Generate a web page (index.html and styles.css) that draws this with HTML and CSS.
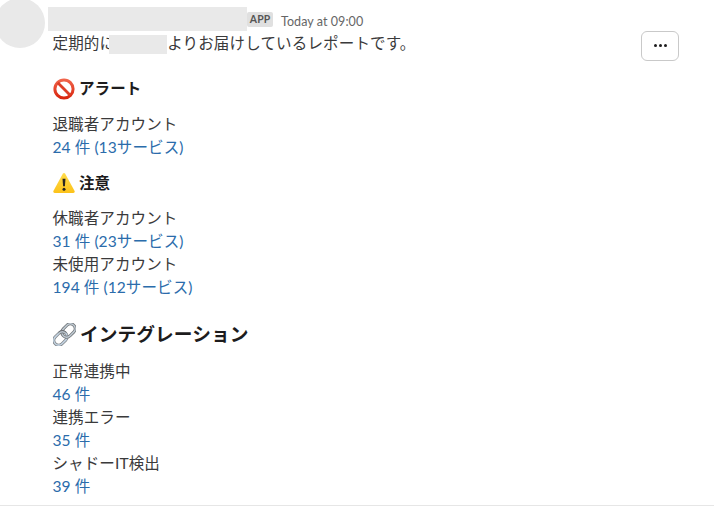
FILE: index.html
```html
<!DOCTYPE html>
<html lang="ja">
<head>
<meta charset="utf-8">
<title>レポート</title>
<link rel="stylesheet" href="styles.css">
</head>
<body>
<article class="message">
  <div class="avatar"></div>
  <div class="content">
    <header class="head">
      <span class="name"></span>
      <span class="badge">APP</span>
      <time class="time">Today at 09:00</time>
    </header>
    <div class="intro">
      <p class="line">定期的に<span class="mask"></span>よりお届けしているレポートです。</p>
      <button class="more" aria-label="その他"><i></i><i></i><i></i></button>
    </div>
    <h3 class="title title-alert">
      <svg class="icon" viewBox="0 0 22 22">
        <defs><linearGradient id="red" x1="0" y1="0" x2="0" y2="1"><stop offset="0" stop-color="#f0644a"/><stop offset="1" stop-color="#d9260f"/></linearGradient></defs>
        <circle cx="11" cy="11" r="9.1" fill="none" stroke="url(#red)" stroke-width="3"/>
        <path d="M4.8 4.8 17.2 17.2" stroke="#dd3e27" stroke-width="2.8"/>
      </svg><span>アラート</span>
    </h3>
    <p class="line">退職者アカウント</p>
    <a class="line link">24 件 (13サービス)</a>
    <h3 class="title title-warning">
      <svg class="icon" viewBox="0 0 22 22">
        <defs><linearGradient id="yellow" x1="0" y1="0" x2="0" y2="1"><stop offset="0" stop-color="#ffdc4a"/><stop offset="1" stop-color="#fcc21a"/></linearGradient></defs>
        <path d="M9.8 1.8Q11 .2 12.2 1.8L21.6 19Q22.2 21 20.3 21H1.7Q-.2 21 .4 19Z" fill="url(#yellow)"/>
        <path d="M9.5 6.7h3l-.6 7.6h-1.8Z" fill="#292622"/>
        <circle cx="11" cy="17.3" r="1.5" fill="#292622"/>
      </svg><span>注意</span>
    </h3>
    <p class="line">休職者アカウント</p>
    <a class="line link">31 件 (23サービス)</a>
    <p class="line">未使用アカウント</p>
    <a class="line link">194 件 (12サービス)</a>
    <h2 class="title title-integration">
      <svg class="icon icon-link" viewBox="0 0 24 24">
        <g fill="none" transform="rotate(-45 12 12)">
          <rect x="-1.6" y="7" width="15.4" height="10" rx="5" stroke="#7d8184" stroke-width="3.2"/>
          <rect x="-1.6" y="7" width="15.4" height="10" rx="5" stroke="#c3d3e2" stroke-width="1.7"/>
          <rect x="10.2" y="7" width="15.4" height="10" rx="5" stroke="#707477" stroke-width="3.2"/>
          <rect x="10.2" y="7" width="15.4" height="10" rx="5" stroke="#c0cbd4" stroke-width="1.6"/>
          <path d="M8.8 7Q13.8 7 13.8 12" stroke="#686c70" stroke-width="3.2"/>
          <path d="M8.3 7Q13.8 7 13.8 12.5" stroke="#b9c3cb" stroke-width="1.5"/>
        </g>
      </svg><span>インテグレーション</span>
    </h2>
    <p class="line">正常連携中</p>
    <a class="line link">46 件</a>
    <p class="line">連携エラー</p>
    <a class="line link">35 件</a>
    <p class="line">シャドーIT検出</p>
    <a class="line link">39 件</a>
  </div>
</article>
</body>
</html>
```
FILE: styles.css
```css
* { box-sizing: border-box; }

body {
  margin: 0;
  overflow: hidden;
  background: #fff;
  color: #3a3a3b;
  font: 15.56px/23px Lato, "Noto Sans CJK JP", sans-serif;
  letter-spacing: 0.07px;
}

.message {
  display: flex;
  height: 506px;
  border-bottom: 1px solid #e6e6e6;
}

.avatar {
  flex: none;
  width: 50px;
  height: 50px;
  margin: -2px 7.5px 0 -5px;
  border-radius: 50%;
  background: #e9e9e9;
}

.content { flex: 1; }

.head {
  display: flex;
  align-items: center;
  height: 24px;
  margin: 7px 0 1px -4.5px;
}

.name { width: 199px; height: 24px; background: #e9e9e9; }

.badge {
  width: 26px;
  height: 15px;
  border-radius: 2px;
  background: #e0e0e0;
  color: #555;
  font-size: 10.4px;
  font-weight: 700;
  line-height: 15px;
  text-align: center;
}

.time { margin: 5px 0 0 8px; color: #666; font-size: 12.5px; }

.intro {
  display: flex;
  justify-content: space-between;
  height: 37px;
  padding-right: 35px;
}

.line { display: block; height: 23px; margin: 0; white-space: nowrap; }

.intro .line { letter-spacing: 0.12px; }

.link { color: #2b6cab; }

.mask {
  display: inline-block;
  position: relative;
  width: 58px;
  height: 19px;
  margin-left: -6px;
  vertical-align: -5px;
  background: #e9e9e9;
}

.more {
  display: flex;
  align-items: center;
  justify-content: center;
  gap: 2px;
  width: 38px;
  height: 30px;
  margin: -1px 0 0;
  padding: 0 0 2px;
  border: 1.5px solid #c9c9c9;
  border-radius: 6px;
  background: #fff;
}

.more i { width: 3px; height: 3px; border-radius: 50%; background: #1d1c1d; }

.title {
  display: flex;
  align-items: center;
  gap: 4.5px;
  margin: 0;
  color: #1d1c1d;
  font-size: 15.5px;
  font-weight: 700;
}

.title-alert { height: 39px; margin: 0 0 5px; }
.title-warning { height: 48px; }
.title-integration { height: 47px; margin: 12px 0 2px; font-size: 18.7px; gap: 4.5px; }

.icon { flex: none; width: 22px; height: 22px; }
.icon-link { width: 23px; height: 23px; }
```
